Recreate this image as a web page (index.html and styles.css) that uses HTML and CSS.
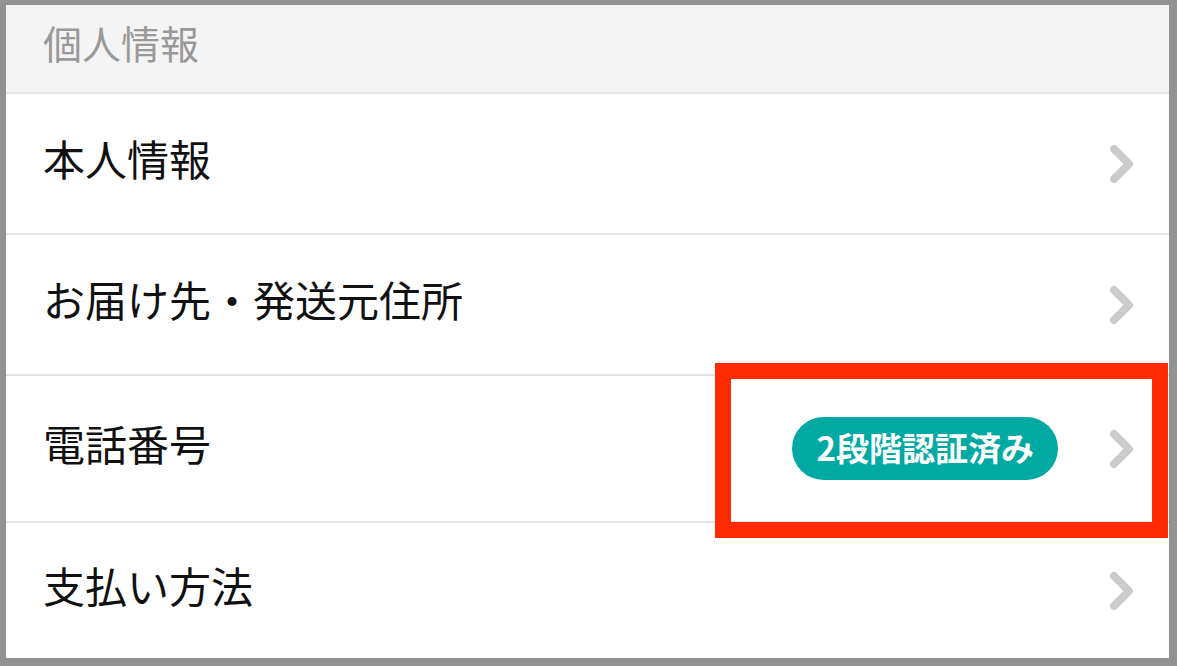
FILE: index.html
```html
<!DOCTYPE html>
<html lang="ja">
<head>
  <meta charset="UTF-8" />
  <meta name="viewport" content="width=device-width, initial-scale=1.0"/>
  <title>個人情報</title>
  <link rel="stylesheet" href="styles.css">
</head>
<body>
  <div class="settings-panel">

    <div class="settings-header">個人情報</div>

    <ul class="settings-list">
      <li class="settings-item item-1">
        <span class="item-label">本人情報</span>
        <svg class="chevron" viewBox="0 0 24 40" width="24" height="40">
          <polyline points="4,5 19,20 4,35" />
        </svg>
      </li>
      <li class="settings-item item-2">
        <span class="item-label">お届け先・発送元住所</span>
        <svg class="chevron" viewBox="0 0 24 40" width="24" height="40">
          <polyline points="4,5 19,20 4,35" />
        </svg>
      </li>
      <li class="settings-item item-3">
        <span class="item-label">電話番号</span>
        <div class="item-controls">
          <span class="badge">2段階認証済み</span>
          <svg class="chevron" viewBox="0 0 24 40" width="24" height="40">
            <polyline points="4,5 19,20 4,35" />
          </svg>
        </div>
        <div class="highlight"></div>
      </li>
      <li class="settings-item item-4">
        <span class="item-label">支払い方法</span>
        <svg class="chevron" viewBox="0 0 24 40" width="24" height="40">
          <polyline points="4,5 19,20 4,35" />
        </svg>
      </li>
    </ul>

  </div>
</body>
</html>
```

FILE: styles.css
```css
html, body {
  margin: 0;
  padding: 0;
}
body {
  background: #929292;
  padding: 5px 8px 8px 6px;
  height: 666px;
  box-sizing: border-box;
  font-family: "Noto Sans CJK JP", "Noto Sans", sans-serif;
}

.settings-panel {
  background: #fff;
  height: 653px;
  overflow: hidden;
}

.settings-header {
  display: flex;
  align-items: center;
  height: 89px;
  padding: 0 0 12px 37px;
  box-sizing: border-box;
  background: #f4f4f4;
  color: #999;
  font-size: 39px;
  line-height: 1;
  border-bottom: 2px solid #e3e3e3;
}

.settings-list {
  list-style: none;
  margin: 0;
  padding: 0;
}
.settings-item {
  position: relative;
  display: flex;
  align-items: center;
  justify-content: space-between;
  padding: 0 36px 0 37px;
  box-sizing: border-box;
  border-bottom: 2px solid #e3e3e3;
}
.item-1 { height: 141px; }
.item-2 { height: 141px; }
.item-3 { height: 147px; }
.item-4 { height: 135px; border-bottom: none; }

.item-label {
  font-size: 42px;
  line-height: 1;
  color: #111;
  margin-bottom: 12px;
}

.item-controls {
  display: flex;
  align-items: center;
  gap: 52px;
}

.badge {
  display: inline-flex;
  align-items: center;
  height: 63px;
  padding: 0 24px 3px 25px;
  box-sizing: border-box;
  border-radius: 32px;
  background: #00a9a1;
  color: #fff;
  font-size: 33px;
  font-weight: 700;
  line-height: 1;
}

.chevron {
  display: block;
  margin-right: -1px;
}
.chevron polyline {
  fill: none;
  stroke: #cbcbcb;
  stroke-width: 8;
  stroke-linecap: round;
  stroke-linejoin: round;
}

/* recuadro rojo de aviso */
.highlight {
  position: absolute;
  top: -13px;
  right: 1px;
  width: 453px;
  height: 175px;
  box-sizing: border-box;
  border: 16px solid #ff2a00;
  pointer-events: none;
}
```
